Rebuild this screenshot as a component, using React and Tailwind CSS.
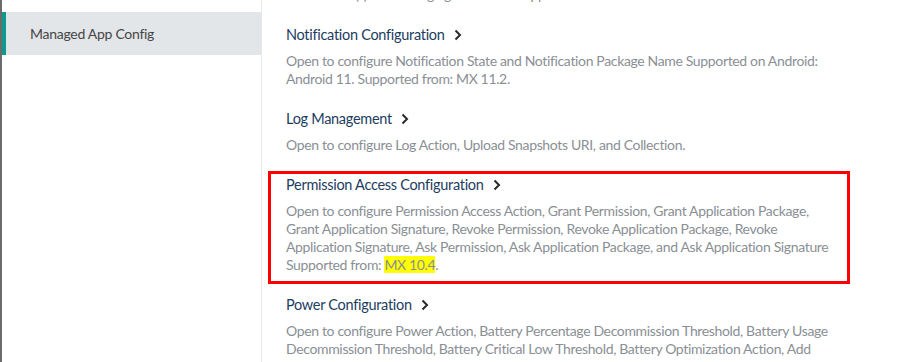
const sections = [
  {
    title: "Notification Configuration",
    lines: [
      "Open to configure Notification State and Notification Package Name Supported on Android:",
      "Android 11. Supported from: MX 11.2.",
    ],
  },
  {
    title: "Log Management",
    lines: ["Open to configure Log Action, Upload Snapshots URI, and Collection."],
  },
  {
    title: "Permission Access Configuration",
    boxed: true,
    lines: [
      "Open to configure Permission Access Action, Grant Permission, Grant Application Package,",
      "Grant Application Signature, Revoke Permission, Revoke Application Package, Revoke",
      "Application Signature, Ask Permission, Ask Application Package, and Ask Application Signature",
    ],
    supported: "MX 10.4",
  },
  {
    title: "Power Configuration",
    lines: [
      "Open to configure Power Action, Battery Percentage Decommission Threshold, Battery Usage",
      "Decommission Threshold, Battery Critical Low Threshold, Battery Optimization Action, Add",
    ],
  },
];

function Chevron() {
  return (
    <svg width="8" height="12" viewBox="0 0 8 12" className="ml-[9px] shrink-0">
      <path d="M1.5 1.5 L6 6 L1.5 10.5" fill="none" stroke="#2a2a2a" strokeWidth="2" />
    </svg>
  );
}

function Section({ s }) {
  return (
    <div className="relative mt-[21px]">
      {s.boxed && (
        <div className="absolute -left-[18px] -top-[4px] w-[582px] -bottom-[10px] border-[3px] border-[#ff0000] pointer-events-none" />
      )}
      <div className="flex items-center h-[20px] text-[14.5px] tracking-[-0.02em] text-[#1c3d60]">
        <span>{s.title}</span>
        <Chevron />
      </div>
      <div className="mt-[7px] text-[14px] leading-[18px] tracking-[-0.025em] text-[#8a8f95] whitespace-nowrap">
        {s.lines.map((l, i) => (
          <div key={i}>{l}</div>
        ))}
        {s.supported && (
          <div>
            Supported from: <span className="bg-[#ffff00]">{s.supported}</span>.
          </div>
        )}
      </div>
    </div>
  );
}

export default function App() {
  return (
    <div
      className="flex w-[914px] h-[362px] overflow-hidden bg-white"
      style={{ fontFamily: "Lato, 'Noto Sans', sans-serif" }}
    >
      <div className="w-[2px] shrink-0 bg-[#6b6b6b]" />

      <div className="w-[260px] shrink-0 border-r border-[#e6e8ea] pt-[12px]">
        <div className="h-[43px] flex items-center bg-[#e3e6e9] border-l-4 border-[#0e9a8d] pl-[24px] text-[14px] tracking-[-0.02em] text-[#454545]">
          Managed App Config
        </div>
      </div>

      <div className="flex-1 pl-[24px]">
        <div className="-mt-[14px] h-[18px] text-[14px] leading-[18px] tracking-[-0.025em] text-[#8a8f95] whitespace-nowrap">
          Delete User(s) and manage guest users. Supported from: MX 11.1.
        </div>
        {sections.map((s) => (
          <Section key={s.title} s={s} />
        ))}
      </div>
    </div>
  );
}
